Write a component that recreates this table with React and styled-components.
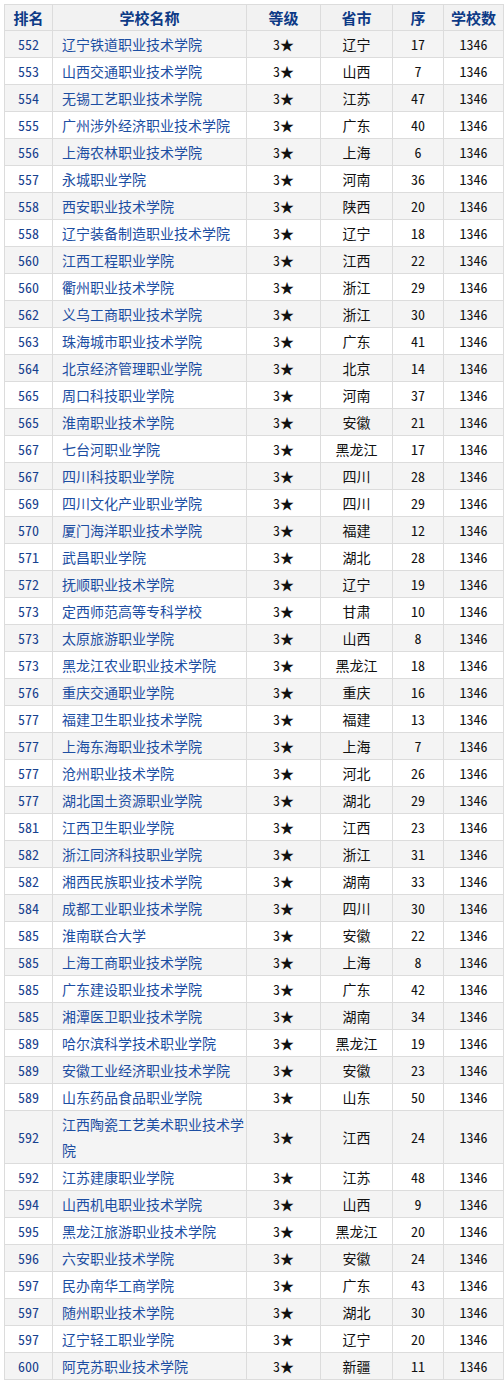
import React from "react";
import styled, { createGlobalStyle } from "styled-components";

const GlobalStyle = createGlobalStyle`
  html, body { margin: 0; padding: 0; background: #fff; }
  body { font-family: "Noto Sans Mono CJK SC", "Noto Sans CJK SC", sans-serif; }
`;

const Page = styled.div`
  padding: 4px 0 5px 4px;
`;

const Table = styled.table`
  table-layout: fixed;
  border-collapse: separate;
  border-spacing: 0;
  width: 500px;
  border-top: 1px solid #dcdcdc;
  border-left: 1px solid #dcdcdc;
  font-size: 14px;
  color: #111;
`;

const Th = styled.th`
  box-sizing: border-box;
  width: ${(p) => p.$w}px;
  height: 26px;
  padding: 0;
  line-height: 25px;
  background: #f2f2f2;
  color: #0d3a86;
  font-size: 15px;
  font-weight: bold;
  font-family: "Noto Sans CJK SC", sans-serif;
  text-align: center;
  border-right: 1px solid #dcdcdc;
  border-bottom: 1px solid #dcdcdc;
`;

const Row = styled.tr`
  background: ${(p) => (p.$alt ? "#f4f4f4" : "#ffffff")};
`;

const Td = styled.td`
  box-sizing: border-box;
  padding: ${(p) => (p.$left ? "0 2px 0 9px" : "0")};
  line-height: 26px;
  text-align: ${(p) => (p.$left ? "left" : "center")};
  vertical-align: middle;
  border-right: 1px solid #dcdcdc;
  border-bottom: 1px solid #dcdcdc;
  color: ${(p) => p.$color || "#111"};
  word-break: break-all;
`;

const NameLink = styled.a`
  color: #1c4ea2;
  text-decoration: none;
`;

const Star = styled.span`
  font-family: "Noto Sans CJK SC", sans-serif;
  font-size: 14px;
`;

const rows = [
  [552, "辽宁铁道职业技术学院", "辽宁", 17],
  [553, "山西交通职业技术学院", "山西", 7],
  [554, "无锡工艺职业技术学院", "江苏", 47],
  [555, "广州涉外经济职业技术学院", "广东", 40],
  [556, "上海农林职业技术学院", "上海", 6],
  [557, "永城职业学院", "河南", 36],
  [558, "西安职业技术学院", "陕西", 20],
  [558, "辽宁装备制造职业技术学院", "辽宁", 18],
  [560, "江西工程职业学院", "江西", 22],
  [560, "衢州职业技术学院", "浙江", 29],
  [562, "义乌工商职业技术学院", "浙江", 30],
  [563, "珠海城市职业技术学院", "广东", 41],
  [564, "北京经济管理职业学院", "北京", 14],
  [565, "周口科技职业学院", "河南", 37],
  [565, "淮南职业技术学院", "安徽", 21],
  [567, "七台河职业学院", "黑龙江", 17],
  [567, "四川科技职业学院", "四川", 28],
  [569, "四川文化产业职业学院", "四川", 29],
  [570, "厦门海洋职业技术学院", "福建", 12],
  [571, "武昌职业学院", "湖北", 28],
  [572, "抚顺职业技术学院", "辽宁", 19],
  [573, "定西师范高等专科学校", "甘肃", 10],
  [573, "太原旅游职业学院", "山西", 8],
  [573, "黑龙江农业职业技术学院", "黑龙江", 18],
  [576, "重庆交通职业学院", "重庆", 16],
  [577, "福建卫生职业技术学院", "福建", 13],
  [577, "上海东海职业技术学院", "上海", 7],
  [577, "沧州职业技术学院", "河北", 26],
  [577, "湖北国土资源职业学院", "湖北", 29],
  [581, "江西卫生职业学院", "江西", 23],
  [582, "浙江同济科技职业学院", "浙江", 31],
  [582, "湘西民族职业技术学院", "湖南", 33],
  [584, "成都工业职业技术学院", "四川", 30],
  [585, "淮南联合大学", "安徽", 22],
  [585, "上海工商职业技术学院", "上海", 8],
  [585, "广东建设职业技术学院", "广东", 42],
  [585, "湘潭医卫职业技术学院", "湖南", 34],
  [589, "哈尔滨科学技术职业学院", "黑龙江", 19],
  [589, "安徽工业经济职业技术学院", "安徽", 23],
  [589, "山东药品食品职业学院", "山东", 50],
  [592, "江西陶瓷工艺美术职业技术学院", "江西", 24],
  [592, "江苏建康职业学院", "江苏", 48],
  [594, "山西机电职业技术学院", "山西", 9],
  [595, "黑龙江旅游职业技术学院", "黑龙江", 20],
  [596, "六安职业技术学院", "安徽", 24],
  [597, "民办南华工商学院", "广东", 43],
  [597, "随州职业技术学院", "湖北", 30],
  [597, "辽宁轻工职业学院", "辽宁", 20],
  [600, "阿克苏职业技术学院", "新疆", 11],
];

const headers = [
  ["排名", 48],
  ["学校名称", 194],
  ["等级", 74],
  ["省市", 72],
  ["序", 51],
  ["学校数", 60],
];

export default function App() {
  return (
    <>
      <GlobalStyle />
      <Page>
        <Table>
          <thead>
            <tr>
              {headers.map(([h, w]) => (
                <Th key={h} $w={w}>
                  {h}
                </Th>
              ))}
            </tr>
          </thead>
          <tbody>
            {rows.map(([rank, name, prov, seq], i) => (
              <Row key={i} $alt={i % 2 === 0}>
                <Td $color="#17418e">{rank}</Td>
                <Td $left>
                  <NameLink href="#">{name}</NameLink>
                </Td>
                <Td>
                  3<Star>★</Star>
                </Td>
                <Td>{prov}</Td>
                <Td>{seq}</Td>
                <Td>1346</Td>
              </Row>
            ))}
          </tbody>
        </Table>
      </Page>
    </>
  );
}
